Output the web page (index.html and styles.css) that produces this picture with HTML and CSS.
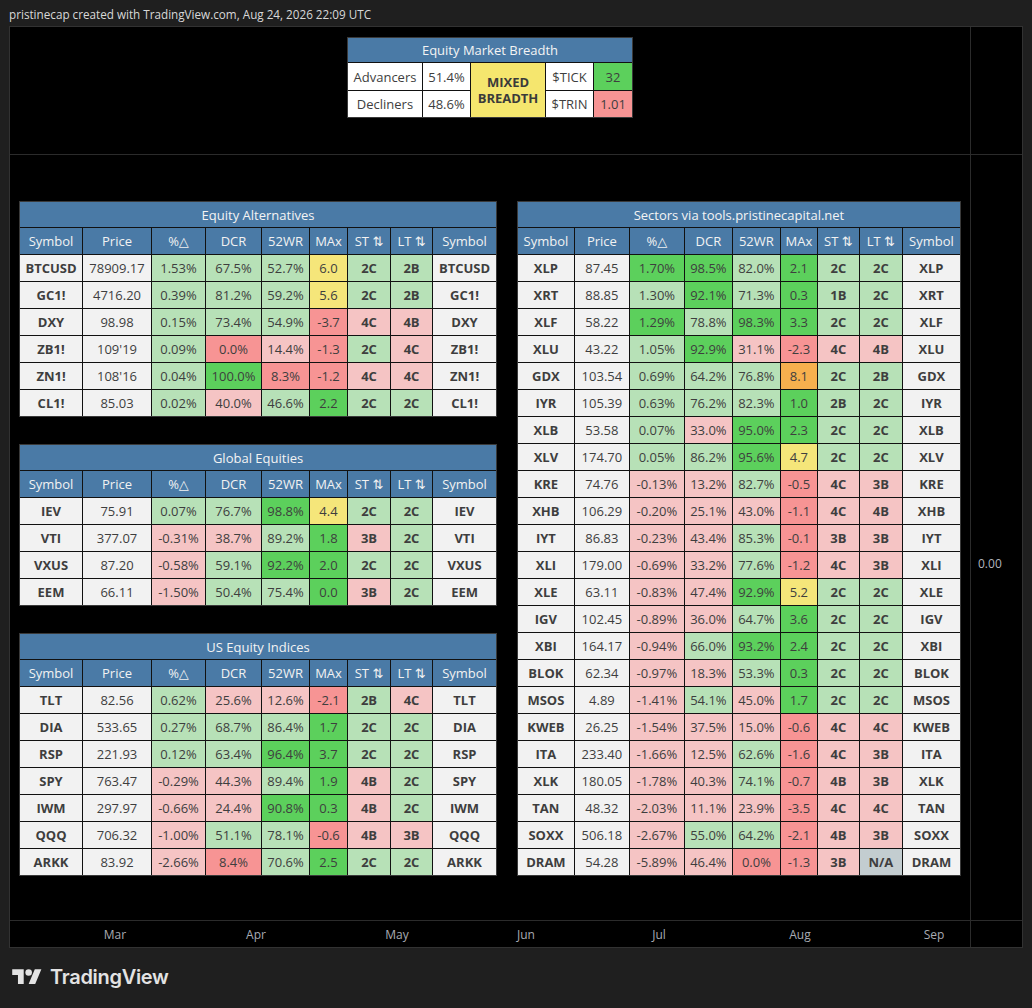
FILE: index.html
```html
<!DOCTYPE html>
<html>
<head>
<meta charset="utf-8">
<link rel="stylesheet" href="styles.css">
</head>
<body>
<div class="caption">pristinecap created with TradingView.com, Aug 24, 2026 22:09 UTC</div>
<div class="frame">
  <div class="pane-top">
    <table class="breadth">
      <colgroup><col class="b1"><col class="b2"><col class="b3"><col class="b4"><col class="b5"></colgroup>
      <tr class="title"><th colspan="5">Equity Market Breadth</th></tr>
      <tr><td class="w">Advancers</td><td class="w">51.4%</td><td class="mixed" rowspan="2">MIXED<br>BREADTH</td><td class="w">$TICK</td><td class="G">32</td></tr>
      <tr><td class="w">Decliners</td><td class="w">48.6%</td><td class="w">$TRIN</td><td class="r">1.01</td></tr>
    </table>
  </div>
  <div class="scale-top"></div>
  <div class="pane-main">
    <div class="left-col">
      <table class="dt lt">
        <colgroup><col class="c1"><col class="c2"><col class="c3"><col class="c4"><col class="c5"><col class="c6"><col class="c7"><col class="c8"><col class="c9"></colgroup>
        <tr class="title"><th colspan="9">Equity Alternatives</th></tr>
        <tr class="hdr"><th>Symbol</th><th>Price</th><th>%△</th><th>DCR</th><th>52WR</th><th>MAx</th><th>ST ⇅</th><th>LT ⇅</th><th>Symbol</th></tr>
        <tr><td>BTCUSD</td><td>78909.17</td><td class="g">1.53%</td><td class="g">67.5%</td><td class="g">52.7%</td><td class="y">6.0</td><td class="g">2C</td><td class="g">2B</td><td>BTCUSD</td></tr>
        <tr><td>GC1!</td><td>4716.20</td><td class="g">0.39%</td><td class="g">81.2%</td><td class="g">59.2%</td><td class="y">5.6</td><td class="g">2C</td><td class="g">2B</td><td>GC1!</td></tr>
        <tr><td>DXY</td><td>98.98</td><td class="g">0.15%</td><td class="g">73.4%</td><td class="g">54.9%</td><td class="r">-3.7</td><td class="p">4C</td><td class="p">4B</td><td>DXY</td></tr>
        <tr><td>ZB1!</td><td>109'19</td><td class="g">0.09%</td><td class="r">0.0%</td><td class="p">14.4%</td><td class="r">-1.3</td><td class="g">2C</td><td class="p">4C</td><td>ZB1!</td></tr>
        <tr><td>ZN1!</td><td>108'16</td><td class="g">0.04%</td><td class="G">100.0%</td><td class="r">8.3%</td><td class="r">-1.2</td><td class="p">4C</td><td class="p">4C</td><td>ZN1!</td></tr>
        <tr><td>CL1!</td><td>85.03</td><td class="g">0.02%</td><td class="p">40.0%</td><td class="g">46.6%</td><td class="G">2.2</td><td class="g">2C</td><td class="g">2C</td><td>CL1!</td></tr>
      </table>
      <table class="dt lt">
        <colgroup><col class="c1"><col class="c2"><col class="c3"><col class="c4"><col class="c5"><col class="c6"><col class="c7"><col class="c8"><col class="c9"></colgroup>
        <tr class="title"><th colspan="9">Global Equities</th></tr>
        <tr class="hdr"><th>Symbol</th><th>Price</th><th>%△</th><th>DCR</th><th>52WR</th><th>MAx</th><th>ST ⇅</th><th>LT ⇅</th><th>Symbol</th></tr>
        <tr><td>IEV</td><td>75.91</td><td class="g">0.07%</td><td class="g">76.7%</td><td class="G">98.8%</td><td class="y">4.4</td><td class="g">2C</td><td class="g">2C</td><td>IEV</td></tr>
        <tr><td>VTI</td><td>377.07</td><td class="p">-0.31%</td><td class="p">38.7%</td><td class="g">89.2%</td><td class="G">1.8</td><td class="p">3B</td><td class="g">2C</td><td>VTI</td></tr>
        <tr><td>VXUS</td><td>87.20</td><td class="p">-0.58%</td><td class="g">59.1%</td><td class="G">92.2%</td><td class="G">2.0</td><td class="g">2C</td><td class="g">2C</td><td>VXUS</td></tr>
        <tr><td>EEM</td><td>66.11</td><td class="p">-1.50%</td><td class="g">50.4%</td><td class="g">75.4%</td><td class="G">0.0</td><td class="p">3B</td><td class="g">2C</td><td>EEM</td></tr>
      </table>
      <table class="dt lt">
        <colgroup><col class="c1"><col class="c2"><col class="c3"><col class="c4"><col class="c5"><col class="c6"><col class="c7"><col class="c8"><col class="c9"></colgroup>
        <tr class="title"><th colspan="9">US Equity Indices</th></tr>
        <tr class="hdr"><th>Symbol</th><th>Price</th><th>%△</th><th>DCR</th><th>52WR</th><th>MAx</th><th>ST ⇅</th><th>LT ⇅</th><th>Symbol</th></tr>
        <tr><td>TLT</td><td>82.56</td><td class="g">0.62%</td><td class="p">25.6%</td><td class="p">12.6%</td><td class="r">-2.1</td><td class="g">2B</td><td class="p">4C</td><td>TLT</td></tr>
        <tr><td>DIA</td><td>533.65</td><td class="g">0.27%</td><td class="g">68.7%</td><td class="g">86.4%</td><td class="G">1.7</td><td class="g">2C</td><td class="g">2C</td><td>DIA</td></tr>
        <tr><td>RSP</td><td>221.93</td><td class="g">0.12%</td><td class="g">63.4%</td><td class="G">96.4%</td><td class="G">3.7</td><td class="g">2C</td><td class="g">2C</td><td>RSP</td></tr>
        <tr><td>SPY</td><td>763.47</td><td class="p">-0.29%</td><td class="p">44.3%</td><td class="g">89.4%</td><td class="G">1.9</td><td class="p">4B</td><td class="g">2C</td><td>SPY</td></tr>
        <tr><td>IWM</td><td>297.97</td><td class="p">-0.66%</td><td class="p">24.4%</td><td class="G">90.8%</td><td class="G">0.3</td><td class="p">4B</td><td class="g">2C</td><td>IWM</td></tr>
        <tr><td>QQQ</td><td>706.32</td><td class="p">-1.00%</td><td class="g">51.1%</td><td class="g">78.1%</td><td class="r">-0.6</td><td class="p">4B</td><td class="p">3B</td><td>QQQ</td></tr>
        <tr><td>ARKK</td><td>83.92</td><td class="p">-2.66%</td><td class="r">8.4%</td><td class="g">70.6%</td><td class="G">2.5</td><td class="g">2C</td><td class="g">2C</td><td>ARKK</td></tr>
      </table>
    </div>
    <table class="dt rt">
      <colgroup><col class="r1"><col class="r2"><col class="r3"><col class="r4"><col class="r5"><col class="r6"><col class="r7"><col class="r8"><col class="r9"></colgroup>
      <tr class="title"><th colspan="9">Sectors via tools.pristinecapital.net</th></tr>
      <tr class="hdr"><th>Symbol</th><th>Price</th><th>%△</th><th>DCR</th><th>52WR</th><th>MAx</th><th>ST ⇅</th><th>LT ⇅</th><th>Symbol</th></tr>
      <tr><td>XLP</td><td>87.45</td><td class="G">1.70%</td><td class="G">98.5%</td><td class="g">82.0%</td><td class="G">2.1</td><td class="g">2C</td><td class="g">2C</td><td>XLP</td></tr>
      <tr><td>XRT</td><td>88.85</td><td class="g">1.30%</td><td class="G">92.1%</td><td class="g">71.3%</td><td class="G">0.3</td><td class="g">1B</td><td class="g">2C</td><td>XRT</td></tr>
      <tr><td>XLF</td><td>58.22</td><td class="G">1.29%</td><td class="g">78.8%</td><td class="G">98.3%</td><td class="G">3.3</td><td class="g">2C</td><td class="g">2C</td><td>XLF</td></tr>
      <tr><td>XLU</td><td>43.22</td><td class="g">1.05%</td><td class="G">92.9%</td><td class="p">31.1%</td><td class="r">-2.3</td><td class="p">4C</td><td class="p">4B</td><td>XLU</td></tr>
      <tr><td>GDX</td><td>103.54</td><td class="g">0.69%</td><td class="g">64.2%</td><td class="g">76.8%</td><td class="o">8.1</td><td class="g">2C</td><td class="g">2B</td><td>GDX</td></tr>
      <tr><td>IYR</td><td>105.39</td><td class="g">0.63%</td><td class="g">76.2%</td><td class="g">82.3%</td><td class="G">1.0</td><td class="g">2B</td><td class="g">2C</td><td>IYR</td></tr>
      <tr><td>XLB</td><td>53.58</td><td class="g">0.07%</td><td class="p">33.0%</td><td class="G">95.0%</td><td class="G">2.3</td><td class="g">2C</td><td class="g">2C</td><td>XLB</td></tr>
      <tr><td>XLV</td><td>174.70</td><td class="g">0.05%</td><td class="g">86.2%</td><td class="G">95.6%</td><td class="y">4.7</td><td class="g">2C</td><td class="g">2C</td><td>XLV</td></tr>
      <tr><td>KRE</td><td>74.76</td><td class="p">-0.13%</td><td class="p">13.2%</td><td class="g">82.7%</td><td class="r">-0.5</td><td class="p">4C</td><td class="p">3B</td><td>KRE</td></tr>
      <tr><td>XHB</td><td>106.29</td><td class="p">-0.20%</td><td class="p">25.1%</td><td class="p">43.0%</td><td class="r">-1.1</td><td class="p">4C</td><td class="p">4B</td><td>XHB</td></tr>
      <tr><td>IYT</td><td>86.83</td><td class="p">-0.23%</td><td class="p">43.4%</td><td class="g">85.3%</td><td class="r">-0.1</td><td class="p">3B</td><td class="p">3B</td><td>IYT</td></tr>
      <tr><td>XLI</td><td>179.00</td><td class="p">-0.69%</td><td class="p">33.2%</td><td class="g">77.6%</td><td class="r">-1.2</td><td class="p">4C</td><td class="p">3B</td><td>XLI</td></tr>
      <tr><td>XLE</td><td>63.11</td><td class="p">-0.83%</td><td class="p">47.4%</td><td class="G">92.9%</td><td class="y">5.2</td><td class="g">2C</td><td class="g">2C</td><td>XLE</td></tr>
      <tr><td>IGV</td><td>102.45</td><td class="p">-0.89%</td><td class="p">36.0%</td><td class="g">64.7%</td><td class="G">3.6</td><td class="g">2C</td><td class="g">2C</td><td>IGV</td></tr>
      <tr><td>XBI</td><td>164.17</td><td class="p">-0.94%</td><td class="g">66.0%</td><td class="G">93.2%</td><td class="G">2.4</td><td class="g">2C</td><td class="g">2C</td><td>XBI</td></tr>
      <tr><td>BLOK</td><td>62.34</td><td class="p">-0.97%</td><td class="p">18.3%</td><td class="g">53.3%</td><td class="G">0.3</td><td class="g">2C</td><td class="g">2C</td><td>BLOK</td></tr>
      <tr><td>MSOS</td><td>4.89</td><td class="p">-1.41%</td><td class="g">54.1%</td><td class="p">45.0%</td><td class="G">1.7</td><td class="g">2C</td><td class="g">2C</td><td>MSOS</td></tr>
      <tr><td>KWEB</td><td>26.25</td><td class="p">-1.54%</td><td class="p">37.5%</td><td class="p">15.0%</td><td class="r">-0.6</td><td class="p">4C</td><td class="p">4C</td><td>KWEB</td></tr>
      <tr><td>ITA</td><td>233.40</td><td class="p">-1.66%</td><td class="p">12.5%</td><td class="g">62.6%</td><td class="r">-1.6</td><td class="p">4C</td><td class="p">3B</td><td>ITA</td></tr>
      <tr><td>XLK</td><td>180.05</td><td class="p">-1.78%</td><td class="p">40.3%</td><td class="g">74.1%</td><td class="r">-0.7</td><td class="p">4B</td><td class="p">3B</td><td>XLK</td></tr>
      <tr><td>TAN</td><td>48.32</td><td class="p">-2.03%</td><td class="p">11.1%</td><td class="p">23.9%</td><td class="r">-3.5</td><td class="p">4C</td><td class="p">4C</td><td>TAN</td></tr>
      <tr><td>SOXX</td><td>506.18</td><td class="p">-2.67%</td><td class="g">55.0%</td><td class="g">64.2%</td><td class="r">-2.1</td><td class="p">4B</td><td class="p">3B</td><td>SOXX</td></tr>
      <tr><td>DRAM</td><td>54.28</td><td class="p">-5.89%</td><td class="p">46.4%</td><td class="r">0.0%</td><td class="r">-1.3</td><td class="p">3B</td><td class="n">N/A</td><td>DRAM</td></tr>
    </table>
  </div>
  <div class="scale-main"><span class="price">0.00</span></div>
  <div class="axis">
    <span class="tick t1">Mar</span>
    <span class="tick t2">Apr</span>
    <span class="tick t3">May</span>
    <span class="tick t4">Jun</span>
    <span class="tick t5">Jul</span>
    <span class="tick t6">Aug</span>
    <span class="tick t7">Sep</span>
  </div>
  <div class="scale-bottom"></div>
</div>
<div class="logo">
  <svg class="logo-mark" viewBox="0 0 36 28" width="30" height="23" aria-hidden="true">
    <path d="M14 22H7V11H0V4h14v18zM28 22h-8l7.5-18h8L28 22z" fill="#e3e3e3"/>
    <circle cx="20" cy="8" r="4" fill="#e3e3e3"/>
  </svg>
  <span class="logo-text">TradingView</span>
</div>
</body>
</html>
```
FILE: styles.css
```css
* { box-sizing: border-box; }
html, body { margin: 0; padding: 0; background: #1f1f1f; }
body {
  width: 1032px;
  height: 1008px;
  overflow: hidden;
  font-family: "Open Sans", "DejaVu Sans", sans-serif;
}
.caption {
  height: 26px;
  padding: 7px 0 0 9px;
  color: #d8d8d8;
  font-size: 11.7px;
  line-height: 14px;
  white-space: nowrap;
}
.frame {
  margin: 0 9px;
  height: 922px;
  border: 1px solid #323232;
  background: #000;
  display: grid;
  grid-template-columns: 1fr 51px;
  grid-template-rows: 128px 1fr 26px;
}
.pane-top {
  border-right: 1px solid #2b2b2b;
  border-bottom: 1px solid #2b2b2b;
  display: flex;
  justify-content: center;
  align-items: flex-start;
  padding-top: 10px;
}
.scale-top { border-bottom: 1px solid #2b2b2b; }
.pane-main {
  border-right: 1px solid #2b2b2b;
  border-bottom: 1px solid #2b2b2b;
  display: flex;
  justify-content: space-between;
  align-items: center;
  padding: 2px 9px 0 9px;
}
.scale-main {
  border-bottom: 1px solid #2b2b2b;
  padding: 396px 0 0 7px;
}
.price { color: #b2b5be; font-size: 12px; line-height: 16px; }
.axis {
  position: relative;
  border-right: 1px solid #2b2b2b;
}
.tick {
  position: absolute;
  top: 6px;
  transform: translateX(-50%);
  color: #a8abb3;
  font-size: 12px;
  line-height: 16px;
}
.t1 { left: 105px; }
.t2 { left: 246px; }
.t3 { left: 387px; }
.t4 { left: 516px; }
.t5 { left: 649px; }
.t6 { left: 790px; }
.t7 { left: 924px; }

.left-col {
  display: flex;
  flex-direction: column;
  gap: 27px;
}

/* tables */
table {
  border-collapse: separate;
  border-spacing: 0;
  table-layout: fixed;
  font-size: 13px;
  color: #3e3e3e;
  text-align: center;
  border: 1px solid #3a3a3a;
  background: #000;
}
td, th {
  padding: 0;
  border-right: 1px solid #111;
  border-bottom: 1px solid #111;
  height: 27px;
  white-space: nowrap;
  overflow: hidden;
  vertical-align: middle;
}
tr > :last-child { border-right: 0; }
tr:last-child > td { border-bottom: 0; height: 26px; }
.title th {
  background: #4a7aa6;
  color: #f4f4f4;
  font-weight: 400;
  height: 26px;
}
.hdr th {
  background: #4a7aa6;
  color: #f2f2f2;
  font-weight: 400;
}
.dt td { background: #f2f2f2; }
.dt td:nth-child(1), .dt td:nth-child(9),
.dt td:nth-child(7), .dt td:nth-child(8) { font-weight: 700; }

.lt { width: 478px; }
.rt { width: 444px; }
.c1 { width: 63px; } .c2 { width: 69px; } .c3 { width: 54px; } .c4 { width: 56px; }
.c5 { width: 48px; } .c6 { width: 38px; } .c7 { width: 43px; } .c8 { width: 42px; } .c9 { width: 63px; }
.r1 { width: 57px; } .r2 { width: 55px; } .r3 { width: 55px; } .r4 { width: 48px; }
.r5 { width: 48px; } .r6 { width: 37px; } .r7 { width: 42px; } .r8 { width: 43px; } .r9 { width: 57px; }

.breadth { width: 286px; }
.breadth .title th { height: 25px; }
.breadth td { height: 28px; }
.b1 { width: 75px; } .b2 { width: 48px; } .b3 { width: 75px; } .b4 { width: 48px; } .b5 { width: 38px; }
.breadth td.w { background: #ffffff; }
.breadth td.mixed {
  background: #f5e66e;
  font-weight: 700;
  line-height: 16px;
  color: #3a3a3a;
  border-bottom: 0;
}

/* cell colours */
.dt td.g, .breadth td.g { background: #b7e1b7; }
.dt td.G, .breadth td.G { background: #5cd05c; }
.dt td.p, .breadth td.p { background: #f5c4c4; }
.dt td.r, .breadth td.r { background: #f79494; }
.dt td.y { background: #f5e67a; }
.dt td.o { background: #f7b04e; }
.dt td.n { background: #c3cdd0; }

/* logo */
.logo {
  display: flex;
  align-items: center;
  gap: 8px;
  padding: 17px 0 0 12px;
}
.logo-mark { display: block; }
.logo-text {
  color: #e3e3e3;
  font-family: "Inter", "Open Sans", sans-serif;
  font-weight: 600;
  font-size: 20px;
  letter-spacing: -0.3px;
  line-height: 24px;
}
```
